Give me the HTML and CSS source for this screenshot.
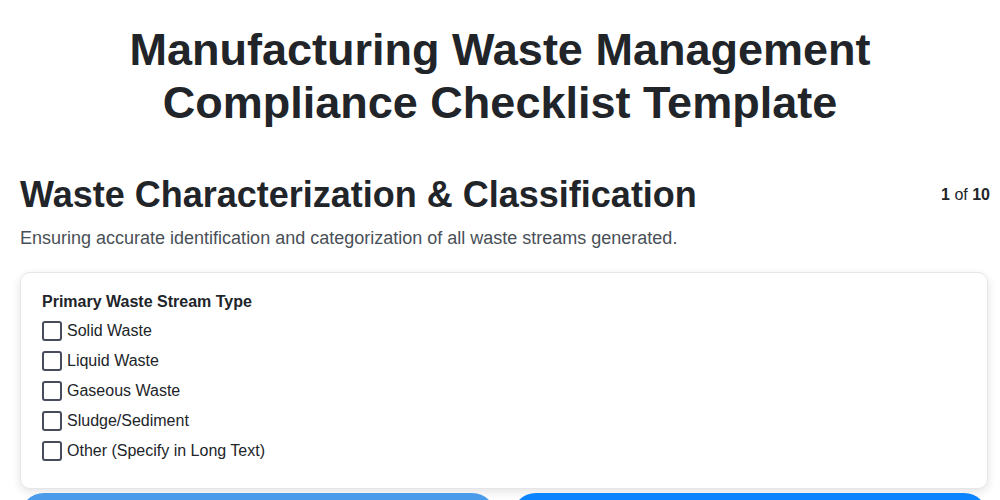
FILE: index.html
```html
<!DOCTYPE html>
<html lang="en">
<head>
<meta charset="utf-8">
<title>Manufacturing Waste Management Compliance Checklist Template</title>
<link rel="stylesheet" href="styles.css">
</head>
<body>
<header class="top">
  <h1 class="title">Manufacturing Waste Management Compliance Checklist Template</h1>
</header>
<main class="page">
  <div class="section-head">
    <h2 class="section-title">Waste Characterization &amp; Classification</h2>
    <div class="progress"><b>1</b> of <b>10</b></div>
  </div>
  <p class="section-desc">Ensuring accurate identification and categorization of all waste streams generated.</p>
  <div class="card">
    <div class="field-label">Primary Waste Stream Type</div>
    <label class="option"><span class="box"></span>Solid Waste</label>
    <label class="option"><span class="box"></span>Liquid Waste</label>
    <label class="option"><span class="box"></span>Gaseous Waste</label>
    <label class="option"><span class="box"></span>Sludge/Sediment</label>
    <label class="option"><span class="box"></span>Other (Specify in Long Text)</label>
  </div>
  <div class="actions">
    <button class="btn btn-prev">Previous</button>
    <button class="btn btn-next">Next</button>
  </div>
</main>
</body>
</html>
```
FILE: styles.css
```css
html, body {
  margin: 0;
  padding: 0;
  background: #ffffff;
}
body {
  font-family: "Liberation Sans", Arial, sans-serif;
  color: #212529;
}
.top {
  padding: 23px 20px 0;
}
.page {
  padding: 0 10px 0 20px;
}
.title {
  max-width: 800px;
  margin: 0 auto 44px;
  font-size: 45px;
  line-height: 53px;
  font-weight: 700;
  text-align: center;
  color: #212529;
}
.section-head {
  display: flex;
  justify-content: space-between;
  align-items: center;
}
.section-title {
  margin: 0;
  font-size: 36px;
  line-height: 43px;
  font-weight: 700;
  color: #212529;
}
.progress {
  font-size: 16px;
  color: #212529;
}
.section-desc {
  margin: 9px 0 20px;
  font-size: 18px;
  line-height: 27px;
  color: #495057;
}
.card {
  margin-right: 2px;
  border: 1px solid #e6e6ea;
  border-radius: 10px;
  box-shadow: 0 3px 10px rgba(0, 0, 0, 0.11);
  padding: 19px 21px 22px;
  display: flex;
  flex-direction: column;
}
.field-label {
  font-size: 16px;
  line-height: 19px;
  font-weight: 700;
  color: #212529;
  margin-bottom: 5px;
}
.option {
  display: flex;
  align-items: center;
  height: 30px;
  font-size: 16px;
  color: #212529;
}
.box {
  width: 20px;
  height: 20px;
  box-sizing: border-box;
  border: 2px solid #474c5c;
  border-radius: 3px;
  margin-right: 5px;
  background: #fff;
}
.actions {
  display: flex;
  gap: 16px;
  margin: 4px 2px 0 0;
}
.btn {
  flex: 1;
  height: 48px;
  border: none;
  border-radius: 24px;
  color: #fff;
  font-family: "Liberation Sans", Arial, sans-serif;
  font-size: 16px;
  font-weight: 700;
}
.btn-prev {
  background: #4a9bea;
}
.btn-next {
  background: #0a84ff;
}
```
